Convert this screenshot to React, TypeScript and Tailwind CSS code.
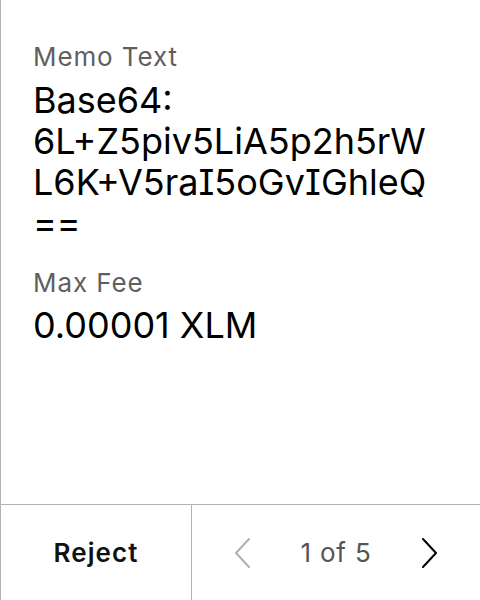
import React from "react";

function Chevron({ dir, className }: { dir: "left" | "right"; className: string }) {
  return (
    <svg width="16" height="30" viewBox="0 0 16 30" className={className} fill="none">
      {dir === "left" ? (
        <path d="M15 1 L2 15 L15 29" stroke="currentColor" strokeWidth="2" strokeLinecap="round" strokeLinejoin="round" />
      ) : (
        <path d="M1 1 L14 15 L1 29" stroke="currentColor" strokeWidth="2" strokeLinecap="round" strokeLinejoin="round" />
      )}
    </svg>
  );
}

export default function App() {
  return (
    <div
      className="w-[480px] h-[600px] bg-white border-l border-[#b3b3b3] flex flex-col [font-feature-settings:'cv08']"
      style={{ fontFamily: "Inter, 'Noto Sans', sans-serif" }}
    >
      <div className="flex-1 pl-[32px] pr-[40px] pt-[41px] flex flex-col gap-[23px]">
        <div className="flex flex-col gap-[7px]">
          <div className="text-[26px] leading-[32px] tracking-[0.9px] text-[#5f5f5f]">Memo Text</div>
          <div className="text-[36px] leading-[41px] text-black break-words">
            Base64: 6L+Z5piv5LiA5p2h5rWL6K+V5raI5oGvIGhleQ==
          </div>
        </div>
        <div className="flex flex-col gap-[6px]">
          <div className="text-[26px] leading-[32px] tracking-[0.9px] text-[#5f5f5f]">Max Fee</div>
          <div className="text-[36px] leading-[40px] text-black">0.00001 XLM</div>
        </div>
      </div>
      <div className="h-[96px] border-t border-[#b3b3b3] flex">
        <div className="w-[191px] border-r border-[#b3b3b3] flex items-center justify-center">
          <span className="text-[26px] tracking-[1.1px] font-semibold text-[#111]">Reject</span>
        </div>
        <div className="flex-1 flex items-center justify-center gap-[50px]">
          <Chevron dir="left" className="text-[#b0b0b0]" />
          <span className="text-[26px] tracking-[0.8px] text-[#555]">1 of 5</span>
          <Chevron dir="right" className="text-black" />
        </div>
      </div>
    </div>
  );
}
